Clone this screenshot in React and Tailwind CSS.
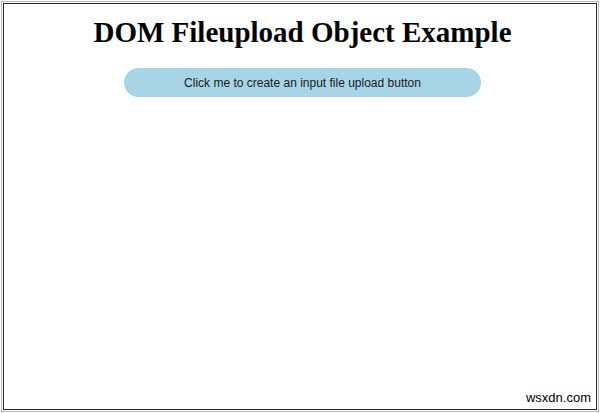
export default function App() {
    return (
        <div className="h-[413px] w-[600px] bg-white p-px">
            <div className="h-full w-full border border-[#b8b8b8] p-px">
                <div className="relative flex h-full flex-col items-center border border-[#2a2a2a] bg-white pl-[5px]">
                    <h1 className="mt-[10px] font-['Liberation_Serif',serif] text-[29px] font-bold leading-[36px] text-black">
                        DOM Fileupload Object Example
                    </h1>
                    <button className="mt-[18px] h-[29px] w-[357px] rounded-full bg-[#a8d5e5] font-['Liberation_Sans',sans-serif] text-[12px] text-[#1a1a1a]">
                        Click me to create an input file upload button
                    </button>
                    <span className="absolute bottom-[2px] right-[5px] font-['Liberation_Sans',sans-serif] text-[13px] text-black">
                        wsxdn.com
                    </span>
                </div>
            </div>
        </div>
    );
}
